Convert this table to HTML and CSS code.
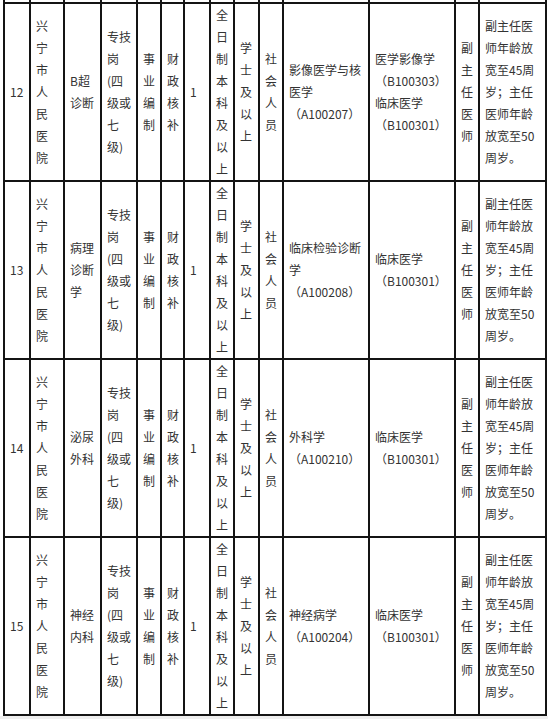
FILE: index.html
```html
<!DOCTYPE html>
<html lang="zh-CN">
<head>
<meta charset="utf-8">
<title>岗位表</title>
<link rel="stylesheet" href="styles.css">
</head>
<body>
<div class="page">
<table class="posts">
<colgroup>
<col class="c-no"><col class="c-unit"><col class="c-post"><col class="c-level"><col class="c-type"><col class="c-fund"><col class="c-num"><col class="c-edu"><col class="c-deg"><col class="c-obj"><col class="c-major"><col class="c-major"><col class="c-title"><col class="c-note">
</colgroup>
<tbody>
<tr class="cut"><td></td><td></td><td></td><td></td><td></td><td></td><td></td><td></td><td></td><td></td><td></td><td></td><td></td><td></td></tr>
<tr>
<td>12</td><td>兴宁市人民医院</td><td>B超诊断</td><td>专技岗(四级或七级)</td><td>事业编制</td><td>财政核补</td><td>1</td><td>全日制本科及以上</td><td>学士及以上</td><td>社会人员</td><td>影像医学与核医学（A100207）</td><td>医学影像学（B100303）临床医学（B100301）</td><td>副主任医师</td><td>副主任医师年龄放宽至45周岁；主任医师年龄放宽至50周岁。</td>
</tr>
<tr>
<td>13</td><td>兴宁市人民医院</td><td>病理诊断学</td><td>专技岗(四级或七级)</td><td>事业编制</td><td>财政核补</td><td>1</td><td>全日制本科及以上</td><td>学士及以上</td><td>社会人员</td><td>临床检验诊断学（A100208）</td><td>临床医学（B100301）</td><td>副主任医师</td><td>副主任医师年龄放宽至45周岁；主任医师年龄放宽至50周岁。</td>
</tr>
<tr>
<td>14</td><td>兴宁市人民医院</td><td>泌尿外科</td><td>专技岗(四级或七级)</td><td>事业编制</td><td>财政核补</td><td>1</td><td>全日制本科及以上</td><td>学士及以上</td><td>社会人员</td><td>外科学（A100210）</td><td>临床医学（B100301）</td><td>副主任医师</td><td>副主任医师年龄放宽至45周岁；主任医师年龄放宽至50周岁。</td>
</tr>
<tr>
<td>15</td><td>兴宁市人民医院</td><td>神经内科</td><td>专技岗(四级或七级)</td><td>事业编制</td><td>财政核补</td><td>1</td><td>全日制本科及以上</td><td>学士及以上</td><td>社会人员</td><td>神经病学（A100204）</td><td>临床医学（B100301）</td><td>副主任医师</td><td>副主任医师年龄放宽至45周岁；主任医师年龄放宽至50周岁。</td>
</tr>
</tbody>
</table>
</div>
</body>
</html>
```
FILE: styles.css
```css
html {
  background: #efefef;
}
body {
  margin: 0;
  font-family: "Noto Sans CJK SC", sans-serif;
  font-size: 12px;
  line-height: 22px;
  color: #333;
}
.page {
  background: #fff;
  padding: 0 2px 0 3px;
}
.posts {
  border-collapse: collapse;
  table-layout: fixed;
  width: 542px;
}
.posts td {
  border: 2px solid #141414;
  padding: 0 4px 0 5px;
  vertical-align: middle;
  text-align: left;
  word-break: normal;
}
.posts tr.cut td {
  border-top: none;
  height: 2px;
  padding: 0;
  line-height: 0;
}
.c-no { width: 26px; }
.c-unit { width: 34px; }
.c-post { width: 37px; }
.c-level { width: 36px; }
.c-type { width: 24px; }
.c-fund { width: 23px; }
.c-num { width: 26px; }
.c-edu { width: 24px; }
.c-deg { width: 25px; }
.c-obj { width: 24px; }
.c-major { width: 86px; }
.c-title { width: 24px; }
.c-note { width: 67px; }
```
